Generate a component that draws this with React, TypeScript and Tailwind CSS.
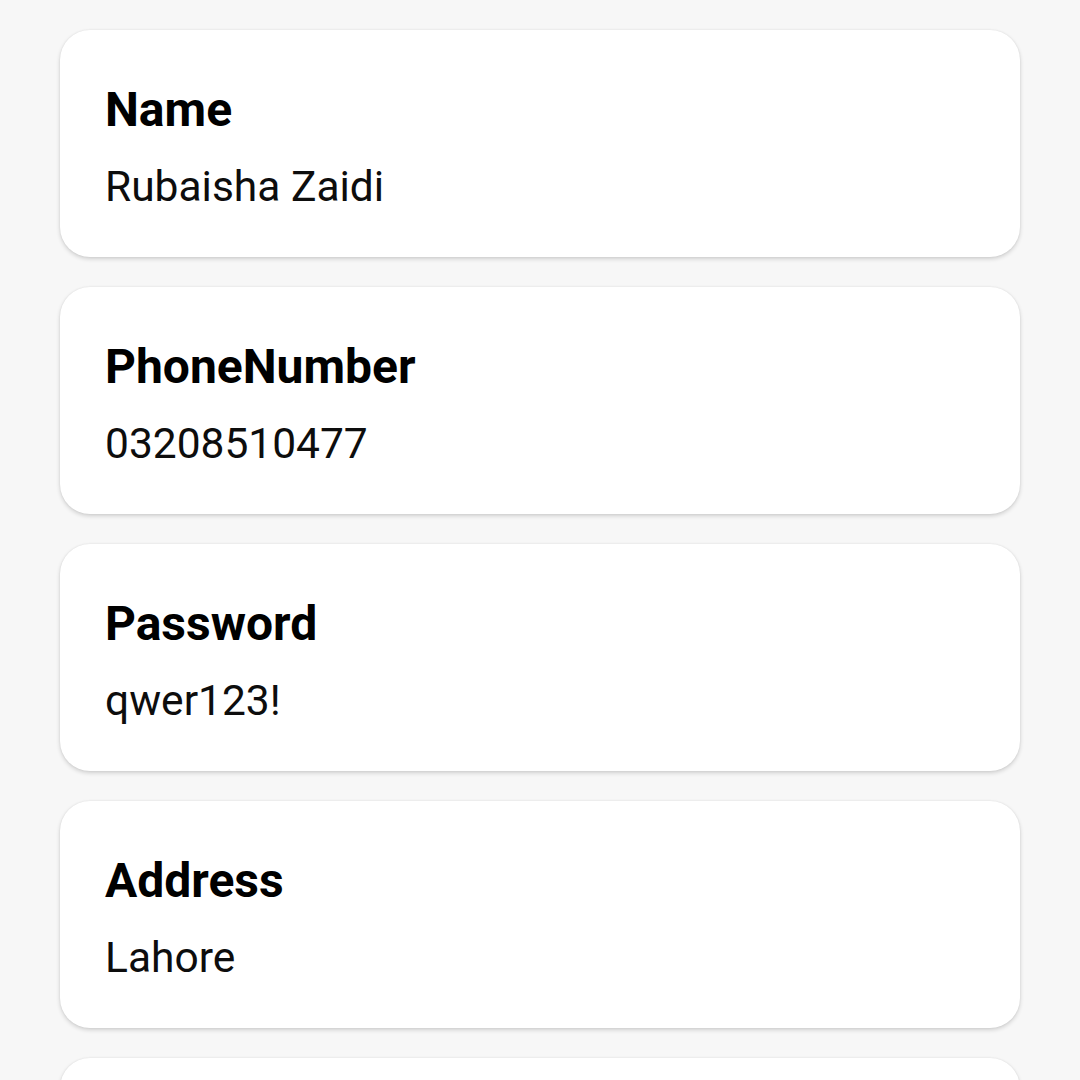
const fields = [
  { label: 'Name', value: 'Rubaisha Zaidi' },
  { label: 'PhoneNumber', value: '03208510477' },
  { label: 'Password', value: 'qwer123!' },
  { label: 'Address', value: 'Lahore' },
];

export default function App() {
  return (
    <div className="min-h-screen bg-[#f7f7f7] font-['Roboto',_'Noto_Sans',_sans-serif]">
      <div className="flex flex-col gap-[30px] px-[60px] py-[30px]">
        {fields.map((f) => (
          <div
            key={f.label}
            className="h-[227px] rounded-[30px] bg-white px-[45px] pt-[52px] shadow-[0_2px_4px_rgba(0,0,0,0.16),0_0_2px_rgba(0,0,0,0.08)]"
          >
            <div className="text-[48px] leading-[56px] font-bold text-black">{f.label}</div>
            <div className="mt-[24px] text-[42.5px] leading-[50px] text-[#0d0d0d]">{f.value}</div>
          </div>
        ))}
        {/* next card, cut off by the screen edge */}
        <div className="h-[227px] rounded-[30px] bg-white shadow-[0_2px_4px_rgba(0,0,0,0.16),0_0_2px_rgba(0,0,0,0.08)]" />
      </div>
    </div>
  );
}
